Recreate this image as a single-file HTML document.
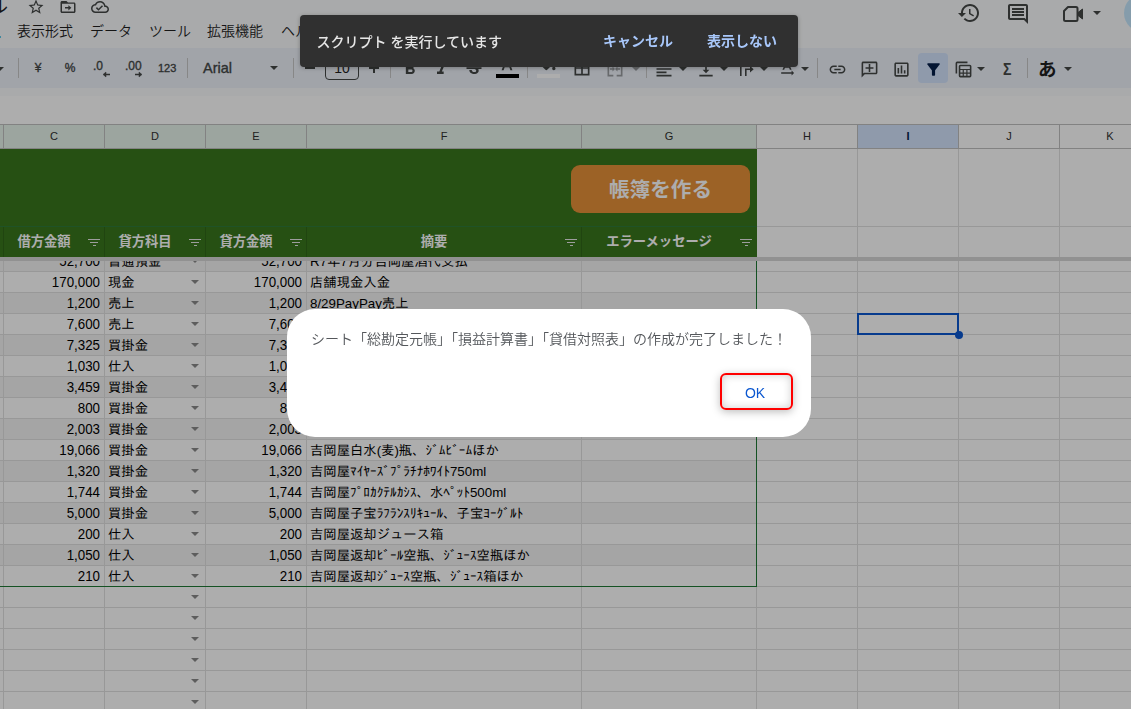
<!DOCTYPE html>
<html lang="ja"><head><meta charset="utf-8"><title>仕訳帳</title>
<style>
*{box-sizing:border-box;margin:0;padding:0}
html,body{width:1131px;height:709px;overflow:hidden;background:#fff}
body{font-family:"Liberation Sans","Noto Sans CJK JP",sans-serif;color:#1f1f1f}
#app{position:relative;width:1131px;height:709px;overflow:hidden;background:#fff}
svg{display:block;position:absolute;overflow:visible}
/* ---------- top bar ---------- */
#topbar{position:absolute;left:0;top:0;width:1131px;height:96px;background:#f9fbfd}
#title{position:absolute;left:-10px;top:-5px;font-size:18px;line-height:24px;color:#1f1f1f;white-space:nowrap}
.menu{position:absolute;top:21px;font-size:14px;line-height:20px;color:#1f1f1f;white-space:nowrap;font-weight:350}
#toolbar{position:absolute;left:0;top:48px;width:1131px;height:40px;background:#edf2fa}
.sep{position:absolute;top:10px;width:1px;height:20px;background:#c7c7c7}
.tb{position:absolute;color:#444746;white-space:nowrap}
.arr{position:absolute;width:0;height:0;border-left:4px solid transparent;border-right:4px solid transparent;border-top:4px solid #444746}
#fontbox{position:absolute;left:325px;top:8px;width:34px;height:24px;border:1px solid #444746;border-radius:4px;font-size:14px;line-height:22px;text-align:center;color:#1f1f1f}
#filteron{position:absolute;left:918px;top:5px;width:30px;height:30px;border-radius:4px;background:#d3e3fd}
#avatar{position:absolute;left:1124px;top:-6px;width:38px;height:38px;border-radius:50%;background:#c4e6fd}
/* ---------- sheet ---------- */
#sheet{position:absolute;left:0;top:0;width:1131px;height:709px}
.chbar{position:absolute;left:0;top:124px;width:1131px;height:25px;background:#c0c0c0}
.ch{position:absolute;top:125px;height:23px;background:#fff;font-size:11px;line-height:23px;text-align:center;color:#303030}
.ch.flt{background:#e6f4ea}
.ch.sel{background:#d3e3fd;color:#041e49;font-weight:bold}
.band{position:absolute;left:0;top:149px;width:757px;height:108px;background:#38761d}
.bandline{position:absolute;left:0;top:226px;width:757px;height:1px;background:#2f7a3a}
.mkbtn{position:absolute;left:571px;top:165px;width:179px;height:48px;border-radius:9px;background:#e69138;color:#fff;font-weight:bold;font-size:20.6px;line-height:50px;text-align:center;font-family:"Liberation Sans","Noto Sans CJK JP",sans-serif}
.hd{position:absolute;top:227px;height:30px;color:#fff;font-weight:bold;font-size:13.300px;line-height:29px;text-align:center;padding-right:20px;white-space:nowrap}
.fi{position:absolute;right:4px;top:12px;width:12px;height:8px;
 background:linear-gradient(#e8e8e8,#e8e8e8) 0 0/12px 1px no-repeat,linear-gradient(#e8e8e8,#e8e8e8) 2px 3px/8px 1px no-repeat,linear-gradient(#e8e8e8,#e8e8e8) 4.5px 6px/3px 1px no-repeat}
.bandrow{position:absolute;left:0;width:756px;background:#f3f3f3}
.hl{position:absolute;left:0;right:0;height:1px;background:#e1e1e1}
.vl{position:absolute;top:149px;bottom:0;width:1px;background:#e1e1e1}
.vh{position:absolute;top:124px;height:25px;width:1px;background:#c0c0c0}
.row{position:absolute;left:0;width:1131px;height:20px;font-size:13.33px;line-height:20px;color:#000}
.c{position:absolute;top:0;height:20px;white-space:nowrap;overflow:hidden}
.num{text-align:right;padding-right:4px;transform:scaleY(1.07);transform-origin:0 5px}
.txt{top:1px;text-align:left;padding-left:3px;font-family:"Liberation Sans","IPAGothic","Noto Sans CJK JP",sans-serif}
.dd{position:absolute;top:8px;width:0;height:0;border-left:4px solid transparent;border-right:4px solid transparent;border-top:4px solid #8a8a8a}
.freeze{position:absolute;left:0;top:257px;width:1131px;height:4px;background:#d6d6d6}
.gv{position:absolute;left:756px;top:261px;width:1px;height:326px;background:#1e7a34}
.gh{position:absolute;left:0;top:586px;width:757px;height:1px;background:#1e7a34}
.selbox{position:absolute;left:857px;top:313px;width:102px;height:22px;border:2px solid #0b57d0}
.seldot{position:absolute;left:955px;top:331px;width:8px;height:8px;border-radius:50%;background:#0b57d0}
#scrim{position:absolute;left:0;top:0;width:1131px;height:709px;background:rgba(0,0,0,.32)}
/* ---------- overlays ---------- */
#toast{will-change:transform;position:absolute;left:300px;top:15px;width:498px;height:51.500px;border-radius:4px;background:#303030;box-shadow:0 1px 4px rgba(0,0,0,.28)}
#toast .msg{position:absolute;left:16.500px;top:16px;font-size:14px;line-height:22px;color:#e6e6e6;font-weight:500;white-space:nowrap}
#toast .act{position:absolute;top:15px;font-size:14px;line-height:22px;color:#a8c7fa;font-weight:700;white-space:nowrap}
#dlg{will-change:transform;position:absolute;left:287px;top:309px;width:524px;height:128px;border-radius:28px;background:#fff}
#dlg .msg{position:absolute;left:24px;top:19px;font-size:14px;line-height:22px;color:#54575b;font-weight:350;white-space:nowrap}
#ok{position:absolute;left:433px;top:64.400px;width:73px;height:37px;border:2px solid #f00;border-radius:6px;font-size:14px;line-height:37px;text-align:center;text-indent:-3px;color:#0b57d0;box-shadow:0 2px 8px rgba(0,0,0,.26),inset 0 0 8px rgba(0,0,0,.2)}

.hv{position:absolute;top:227px;height:30px;width:1px;background:rgba(0,0,0,.13)}
#cy{position:absolute;left:0;top:36px;width:1px;height:2px;background:#5cc8e8}
.tk{-webkit-text-stroke:.350px #444746}

</style></head>
<body>
<div id="app">
<div id="topbar">
<div id="title">ル</div><div id="cy"></div>
<svg style="left:27px;top:-2px" width="18" height="18" viewBox="0 0 24 24" fill="#444746"><path d="M22 9.24l-7.19-.62L12 2 9.19 8.63 2 9.24l5.46 4.73L5.82 21 12 17.27 18.18 21l-1.63-7.03L22 9.24zM12 15.4l-3.76 2.27 1-4.28-3.32-2.88 4.38-.38L12 6.1l1.71 4.04 4.38.38-3.32 2.88 1 4.28L12 15.4z"/></svg>
<svg style="left:59px;top:-2px" width="18" height="18" viewBox="0 0 24 24" fill="#444746"><path d="M20 6h-8l-2-2H4c-1.100 0-2 .900-2 2v12c0 1.100.900 2 2 2h16c1.100 0 2-.900 2-2V8c0-1.100-.900-2-2-2zm0 12H4V7.500h16V18zM8 12h4.500V9.500L16.500 13l-4 3.500V14H8z"/></svg>
<svg style="left:91px;top:-2px" width="18" height="18" viewBox="0 0 24 24" fill="#444746"><path d="M19.35 10.04C18.67 6.59 15.64 4 12 4 9.11 4 6.6 5.64 5.35 8.04 2.34 8.36 0 10.91 0 14c0 3.31 2.69 6 6 6h13c2.76 0 5-2.24 5-5 0-2.64-2.05-4.78-4.65-4.96zM19 18H6c-2.21 0-4-1.79-4-4 0-2.05 1.53-3.76 3.56-3.97l1.07-.11.5-.95C8.08 7.14 9.94 6 12 6c2.62 0 4.88 1.86 5.39 4.43l.3 1.5 1.53.11c1.56.1 2.78 1.41 2.78 2.96 0 1.65-1.35 3-3 3zm-9-3.82l-2.09-2.09L6.5 13.5 10 17l6.01-6.01-1.41-1.41z"/></svg>
<div class="menu" style="left:17px">表示形式</div>
<div class="menu" style="left:90px">データ</div>
<div class="menu" style="left:149px">ツール</div>
<div class="menu" style="left:207px">拡張機能</div>
<div class="menu" style="left:281px">ヘルプ</div>
<!-- right icons -->
<svg style="left:957px;top:1px" width="24" height="24" viewBox="0 0 24 24" fill="#444746"><path d="M13 3c-4.97 0-9 4.03-9 9H1l3.89 3.89.07.14L9 12H6c0-3.87 3.13-7 7-7s7 3.13 7 7-3.13 7-7 7c-1.93 0-3.68-.79-4.94-2.06l-1.42 1.42C8.27 19.99 10.51 21 13 21c4.97 0 9-4.03 9-9s-4.03-9-9-9zm-1 5v5l4.28 2.54.72-1.21-3.5-2.08V8H12z"/></svg>
<svg style="left:1006px;top:2px" width="24" height="24" viewBox="0 0 24 24" fill="#444746"><path d="M21.99 4c0-1.1-.89-2-1.99-2H4c-1.1 0-2 .9-2 2v12c0 1.1.9 2 2 2h14l4 4-.01-18zM20 4v13.17L18.83 16H4V4h16zM6 12h12v2H6zm0-3h12v2H6zm0-3h12v2H6z"/></svg>
<svg style="left:1061px;top:2px" width="24" height="24" viewBox="0 0 24 24" fill="none" stroke="#444746" stroke-width="2" stroke-linejoin="round"><path d="M7 5h8a1.500 1.500 0 0 1 1.500 1.500v11A1.500 1.500 0 0 1 15 19H4.500A1.500 1.500 0 0 1 3 17.500V9z"/><path d="M17 10.500l4.500-3.500v10l-4.500-3.500z" fill="#444746" stroke-width="1"/></svg>
<div class="arr" style="left:1093px;top:11px"></div>
<div id="avatar"></div>
<div id="toolbar">
<div class="arr" style="left:-4px;top:19px"></div>
<div class="sep" style="left:18px"></div>
<div class="tb tk" style="left:33px;top:11px;font-size:12px;line-height:18px;width:10px;text-align:center">¥</div>
<div class="tb tk" style="left:64px;top:11px;font-size:12px;line-height:18px;width:12px;text-align:center">%</div>
<div class="tb tk" style="left:93px;top:9px;font-size:12px;line-height:18px">.0</div>
<svg style="left:102px;top:23px" width="9" height="7" viewBox="0 0 9 7" fill="#444746" stroke="#444746" stroke-width="1.500"><path d="M8 3.500H2.500"/><path d="M4 1L1 3.500L4 6z" stroke-width=".500"/></svg>
<div class="tb tk" style="left:125px;top:9px;font-size:12px;line-height:18px">.00</div>
<svg style="left:133.500px;top:23px" width="9" height="7" viewBox="0 0 9 7" fill="#444746" stroke="#444746" stroke-width="1.500"><path d="M1 3.500H6.500"/><path d="M5 1L8 3.500L5 6z" stroke-width=".500"/></svg>
<div class="tb tk" style="left:158px;top:11px;font-size:11px;line-height:18px">123</div>
<div class="sep" style="left:187px"></div>
<div class="tb tk" style="left:203px;top:10px;font-size:14.500px;line-height:20px">Arial</div>
<div class="arr" style="left:270px;top:18px"></div>
<div class="sep" style="left:293px"></div>
<div class="tb" style="left:305px;top:19px;width:10px;height:2px;background:#444746"></div>
<div id="fontbox">10</div>
<div class="tb" style="left:369px;top:19px;width:10px;height:2px;background:#444746"></div>
<div class="tb" style="left:373px;top:15px;width:2px;height:10px;background:#444746"></div>
<div class="sep" style="left:390px"></div>
<svg style="left:400px;top:10.500px" width="20" height="20" viewBox="0 0 24 24" fill="#444746"><path d="M15.600 10.790c.970-.670 1.650-1.770 1.650-2.790 0-2.260-1.750-4-4-4H7v14h7.040c2.090 0 3.710-1.700 3.710-3.790 0-1.520-.860-2.820-2.150-3.420zM10 6.500h3c.830 0 1.500.670 1.500 1.500s-.670 1.500-1.500 1.500h-3v-3zm3.500 9H10v-3h3.500c.830 0 1.500.670 1.500 1.500s-.670 1.500-1.500 1.500z"/></svg>
<svg style="left:432px;top:10.500px" width="20" height="20" viewBox="0 0 24 24" fill="#444746"><path d="M10 4v3h2.210l-3.420 8H6v3h8v-3h-2.210l3.420-8H18V4z"/></svg>
<svg style="left:464px;top:10.500px" width="20" height="20" viewBox="0 0 24 24" fill="#444746"><path d="M7.240 8.750c-.260-.480-.390-1.030-.390-1.670 0-.610.130-1.160.400-1.670.260-.500.630-.930 1.110-1.290.480-.350 1.050-.630 1.700-.830.660-.190 1.390-.290 2.180-.290.810 0 1.540.110 2.210.340.660.220 1.230.540 1.690.940.470.400.830.880 1.080 1.430.250.550.380 1.150.380 1.810h-3.010c0-.310-.050-.590-.150-.850-.090-.270-.240-.490-.440-.680-.200-.190-.450-.330-.750-.440-.300-.100-.660-.160-1.060-.160-.390 0-.740.040-1.030.130-.290.090-.530.210-.720.360-.190.160-.340.340-.440.550-.100.210-.150.430-.150.660 0 .480.250.880.740 1.210.380.250.770.480 1.410.700H7.390c-.050-.080-.110-.170-.150-.250zM21 12v-2H3v2h9.620c.180.070.400.140.550.200.370.170.660.340.870.510.210.170.350.360.430.570.070.200.110.430.110.690 0 .230-.050.450-.140.660-.090.200-.230.380-.420.530-.190.150-.420.260-.710.350-.290.080-.630.130-1.010.130-.430 0-.830-.040-1.180-.130s-.660-.230-.910-.420c-.250-.190-.450-.440-.590-.750-.140-.310-.250-.760-.250-1.210H6.400c0 .550.080 1.130.240 1.580.160.450.370.850.650 1.210.280.350.600.660.980.920.370.260.780.480 1.220.650.440.170.900.300 1.380.390.480.080.960.130 1.440.130.800 0 1.530-.090 2.180-.280s1.210-.450 1.670-.790c.460-.340.820-.770 1.070-1.270s.380-1.070.380-1.710c0-.600-.100-1.140-.310-1.610-.050-.110-.110-.230-.170-.330H21z"/></svg>
<svg style="left:497px;top:8px" width="20" height="20" viewBox="0 0 24 24" fill="#444746"><path d="M5.490 17h2.420l1.270-3.580h5.650L16.090 17h2.420L13.250 3h-2.500L5.490 17zm4.420-5.610l2.030-5.790h.12l2.030 5.790H9.910z"/></svg>
<div class="tb" style="left:496px;top:26px;width:23px;height:4px;background:#000"></div>
<div class="sep" style="left:527px"></div>
<svg style="left:538px;top:8px" width="20" height="20" viewBox="0 0 24 24" fill="#444746"><path d="M16.56 8.94L7.62 0 6.21 1.41l2.38 2.38-5.15 5.15c-.59.59-.59 1.54 0 2.12l5.5 5.5c.29.29.68.44 1.06.44s.77-.15 1.06-.44l5.5-5.5c.59-.58.59-1.53 0-2.12zM5.21 10L10 5.21 14.79 10H5.21zM19 11.5s-2 2.17-2 3.5c0 1.1.9 2 2 2s2-.9 2-2c0-1.33-2-3.5-2-3.5z"/></svg>
<div class="tb" style="left:537px;top:26px;width:23px;height:4px;background:#fff"></div>
<svg style="left:572px;top:10px" width="20" height="20" viewBox="0 0 24 24" fill="#444746"><path d="M3 3v18h18V3H3zm8 16H5v-6h6v6zm0-8H5V5h6v6zm8 8h-6v-6h6v6zm0-8h-6V5h6v6z"/></svg>
<svg style="left:605px;top:10.500px" width="20" height="20" viewBox="0 0 24 24" fill="#9a9d9f"><path d="M3 3h7v2H5v14h5v2H3zM21 3h-7v2h5v14h-5v2h7zM6 11h3V9l3 3-3 3v-2H6zM18 11h-3V9l-3 3 3 3v-2h3z" transform="translate(0,0)"/></svg>
<div class="arr" style="left:632px;top:19px;border-top-color:#9a9d9f"></div>
<div class="sep" style="left:646px"></div>
<svg style="left:654px;top:10.500px" width="20" height="20" viewBox="0 0 24 24" fill="#444746"><path d="M15 15H3v2h12v-2zm0-8H3v2h12V7zM3 13h18v-2H3v2zm0 8h18v-2H3v2zM3 3v2h18V3H3z"/></svg>
<div class="arr" style="left:679px;top:19px"></div>
<svg style="left:695.500px;top:10.500px" width="20" height="20" viewBox="0 0 24 24" fill="#444746"><path d="M16 13h-3V3h-2v10H8l4 4 4-4zM4 19v2h16v-2H4z"/></svg>
<div class="arr" style="left:719.500px;top:19px"></div>
<svg style="left:736px;top:10.500px" width="20" height="20" viewBox="0 0 20 20" fill="#444746"><path d="M4 3h1.600v14H4zM9 9.500h1.600v7.500H9zM9 9.500h5V7l3.700 3.300L14 13.600v-2.500H9z"/></svg>
<div class="arr" style="left:759.500px;top:19px"></div>
<svg style="left:776.600px;top:9.500px" width="20" height="20" viewBox="0 0 24 24" fill="#444746"><path d="M12.750 3h-1.500L6.500 14h2.100l.900-2.200h5l.900 2.200h2.100L12.750 3zm-2.620 7L12 4.980 13.870 10h-3.740zm10.370 8l-3-3v2H5v2h12.500v2l3-3z"/></svg>
<div class="arr" style="left:801px;top:19px"></div>
<div class="sep" style="left:817px"></div>
<svg style="left:827.500px;top:11.500px" width="19" height="19" viewBox="0 0 24 24" fill="#444746"><path d="M3.9 12c0-1.710 1.390-3.100 3.100-3.100h4V7H7c-2.760 0-5 2.240-5 5s2.240 5 5 5h4v-1.900H7c-1.710 0-3.100-1.390-3.100-3.100zM8 13h8v-2H8v2zm9-6h-4v1.900h4c1.710 0 3.100 1.390 3.100 3.100s-1.390 3.100-3.100 3.100h-4V17h4c2.760 0 5-2.240 5-5s-2.240-5-5-5z"/></svg>
<svg style="left:859.500px;top:11.500px" width="19" height="19" viewBox="0 0 24 24" fill="#444746"><g transform="translate(24,0) scale(-1,1)"><path d="M22 4c0-1.100-.900-2-2-2H4c-1.100 0-2 .900-2 2v12c0 1.100.900 2 2 2h14l4 4V4zm-2 13.170L18.830 16H4V4h16v13.170zM13 5h-2v4H7v2h4v4h2v-4h4V9h-4z"/></g></svg>
<svg style="left:891.500px;top:11.500px" width="19" height="19" viewBox="0 0 24 24" fill="#444746"><path d="M9 17H7v-7h2v7zm4 0h-2V7h2v10zm4 0h-2v-4h2v4zm2 2H5V5h14v14zm0-16H5c-1.100 0-2 .900-2 2v14c0 1.100.900 2 2 2h14c1.100 0 2-.900 2-2V5c0-1.100-.900-2-2-2z"/></svg>
<div id="filteron"></div>
<svg style="left:923.500px;top:11.500px" width="19" height="19" viewBox="0 0 24 24" fill="#041e49"><path d="M4.250 5.610C6.270 8.200 10 13 10 13v6c0 .550.450 1 1 1h2c.550 0 1-.450 1-1v-6s3.720-4.800 5.740-7.390A.998.998 0 0 0 18.950 4H5.040c-.830 0-1.300.950-.790 1.610z"/></svg>
<svg style="left:953.500px;top:11.500px" width="19" height="19" viewBox="0 0 24 24" fill="none" stroke="#444746" stroke-width="2"><path d="M3 17V4a1 1 0 0 1 1-1h13"/><rect x="7" y="7" width="14" height="14" rx="1"/><path d="M7 12h14M7 16.500h14M11.700 12v9M16.300 12v9" stroke-width="1.500"/></svg>
<div class="arr" style="left:977.300px;top:19px"></div>
<div class="tb" style="left:1003px;top:10px;font-size:16.500px;line-height:22px;font-weight:bold;transform:scaleX(.86);transform-origin:0 0">Σ</div>
<div class="sep" style="left:1027px"></div>
<div class="tb" style="left:1038px;top:10px;font-size:18.500px;line-height:24px;color:#1f1f1f;font-weight:700">あ</div>
<div class="arr" style="left:1064px;top:19px"></div>
</div>
</div>
<div id="sheet">
<div class="bandrow" style="top:261px;height:10px"></div>
<div class="bandrow" style="top:293px;height:20px"></div>
<div class="bandrow" style="top:335px;height:20px"></div>
<div class="bandrow" style="top:377px;height:20px"></div>
<div class="bandrow" style="top:419px;height:20px"></div>
<div class="bandrow" style="top:461px;height:20px"></div>
<div class="bandrow" style="top:503px;height:20px"></div>
<div class="bandrow" style="top:545px;height:20px"></div>
<div class="hl" style="top:271px"></div>
<div class="hl" style="top:292px"></div>
<div class="hl" style="top:313px"></div>
<div class="hl" style="top:334px"></div>
<div class="hl" style="top:355px"></div>
<div class="hl" style="top:376px"></div>
<div class="hl" style="top:397px"></div>
<div class="hl" style="top:418px"></div>
<div class="hl" style="top:439px"></div>
<div class="hl" style="top:460px"></div>
<div class="hl" style="top:481px"></div>
<div class="hl" style="top:502px"></div>
<div class="hl" style="top:523px"></div>
<div class="hl" style="top:544px"></div>
<div class="hl" style="top:565px"></div>
<div class="hl" style="top:586px"></div>
<div class="hl" style="top:607px"></div>
<div class="hl" style="top:628px"></div>
<div class="hl" style="top:649px"></div>
<div class="hl" style="top:670px"></div>
<div class="hl" style="top:691px"></div>
<div class="hl" style="top:712px"></div>
<div class="hl" style="top:226px"></div>
<div class="vl" style="left:3px"></div>
<div class="vl" style="left:104px"></div>
<div class="vl" style="left:205px"></div>
<div class="vl" style="left:306px"></div>
<div class="vl" style="left:581px"></div>
<div class="vl" style="left:756px"></div>
<div class="vl" style="left:857px"></div>
<div class="vl" style="left:958px"></div>
<div class="vl" style="left:1059px"></div>
<div class="row" style="top:251px"><span class="c num" style="left:4px;width:100px">52,700</span><span class="c txt" style="left:105px;width:100px">普通預金</span><i class="dd" style="left:191px"></i><span class="c num" style="left:206px;width:100px">52,700</span><span class="c txt" style="left:307px;width:274px">R7年7月分吉岡屋酒代支払</span></div>
<div class="row" style="top:272px"><span class="c num" style="left:4px;width:100px">170,000</span><span class="c txt" style="left:105px;width:100px">現金</span><i class="dd" style="left:191px"></i><span class="c num" style="left:206px;width:100px">170,000</span><span class="c txt" style="left:307px;width:274px">店舗現金入金</span></div>
<div class="row" style="top:293px"><span class="c num" style="left:4px;width:100px">1,200</span><span class="c txt" style="left:105px;width:100px">売上</span><i class="dd" style="left:191px"></i><span class="c num" style="left:206px;width:100px">1,200</span><span class="c txt" style="left:307px;width:274px">8/29PayPay売上</span></div>
<div class="row" style="top:314px"><span class="c num" style="left:4px;width:100px">7,600</span><span class="c txt" style="left:105px;width:100px">売上</span><i class="dd" style="left:191px"></i><span class="c num" style="left:206px;width:100px">7,600</span><span class="c txt" style="left:307px;width:274px">8/30PayPay売上</span></div>
<div class="row" style="top:335px"><span class="c num" style="left:4px;width:100px">7,325</span><span class="c txt" style="left:105px;width:100px">買掛金</span><i class="dd" style="left:191px"></i><span class="c num" style="left:206px;width:100px">7,325</span><span class="c txt" style="left:307px;width:274px">吉岡屋</span></div>
<div class="row" style="top:356px"><span class="c num" style="left:4px;width:100px">1,030</span><span class="c txt" style="left:105px;width:100px">仕入</span><i class="dd" style="left:191px"></i><span class="c num" style="left:206px;width:100px">1,030</span><span class="c txt" style="left:307px;width:274px">吉岡屋</span></div>
<div class="row" style="top:377px"><span class="c num" style="left:4px;width:100px">3,459</span><span class="c txt" style="left:105px;width:100px">買掛金</span><i class="dd" style="left:191px"></i><span class="c num" style="left:206px;width:100px">3,459</span><span class="c txt" style="left:307px;width:274px">吉岡屋</span></div>
<div class="row" style="top:398px"><span class="c num" style="left:4px;width:100px">800</span><span class="c txt" style="left:105px;width:100px">買掛金</span><i class="dd" style="left:191px"></i><span class="c num" style="left:206px;width:100px">800</span><span class="c txt" style="left:307px;width:274px">吉岡屋</span></div>
<div class="row" style="top:419px"><span class="c num" style="left:4px;width:100px">2,003</span><span class="c txt" style="left:105px;width:100px">買掛金</span><i class="dd" style="left:191px"></i><span class="c num" style="left:206px;width:100px">2,003</span><span class="c txt" style="left:307px;width:274px">吉岡屋</span></div>
<div class="row" style="top:440px"><span class="c num" style="left:4px;width:100px">19,066</span><span class="c txt" style="left:105px;width:100px">買掛金</span><i class="dd" style="left:191px"></i><span class="c num" style="left:206px;width:100px">19,066</span><span class="c txt" style="left:307px;width:274px">吉岡屋白水(麦)瓶、ｼﾞﾑﾋﾞｰﾑほか</span></div>
<div class="row" style="top:461px"><span class="c num" style="left:4px;width:100px">1,320</span><span class="c txt" style="left:105px;width:100px">買掛金</span><i class="dd" style="left:191px"></i><span class="c num" style="left:206px;width:100px">1,320</span><span class="c txt" style="left:307px;width:274px">吉岡屋ﾏｲﾔｰｽﾞﾌﾟﾗﾁﾅﾎﾜｲﾄ750ml</span></div>
<div class="row" style="top:482px"><span class="c num" style="left:4px;width:100px">1,744</span><span class="c txt" style="left:105px;width:100px">買掛金</span><i class="dd" style="left:191px"></i><span class="c num" style="left:206px;width:100px">1,744</span><span class="c txt" style="left:307px;width:274px">吉岡屋ﾌﾟﾛｶｸﾃﾙｶｼｽ、水ﾍﾟｯﾄ500ml</span></div>
<div class="row" style="top:503px"><span class="c num" style="left:4px;width:100px">5,000</span><span class="c txt" style="left:105px;width:100px">買掛金</span><i class="dd" style="left:191px"></i><span class="c num" style="left:206px;width:100px">5,000</span><span class="c txt" style="left:307px;width:274px">吉岡屋子宝ﾗﾌﾗﾝｽﾘｷｭｰﾙ、子宝ﾖｰｸﾞﾙﾄ</span></div>
<div class="row" style="top:524px"><span class="c num" style="left:4px;width:100px">200</span><span class="c txt" style="left:105px;width:100px">仕入</span><i class="dd" style="left:191px"></i><span class="c num" style="left:206px;width:100px">200</span><span class="c txt" style="left:307px;width:274px">吉岡屋返却ジュース箱</span></div>
<div class="row" style="top:545px"><span class="c num" style="left:4px;width:100px">1,050</span><span class="c txt" style="left:105px;width:100px">仕入</span><i class="dd" style="left:191px"></i><span class="c num" style="left:206px;width:100px">1,050</span><span class="c txt" style="left:307px;width:274px">吉岡屋返却ﾋﾞｰﾙ空瓶、ｼﾞｭｰｽ空瓶ほか</span></div>
<div class="row" style="top:566px"><span class="c num" style="left:4px;width:100px">210</span><span class="c txt" style="left:105px;width:100px">仕入</span><i class="dd" style="left:191px"></i><span class="c num" style="left:206px;width:100px">210</span><span class="c txt" style="left:307px;width:274px">吉岡屋返却ｼﾞｭｰｽ空瓶、ｼﾞｭｰｽ箱ほか</span></div>
<div class="row" style="top:587px"><i class="dd" style="left:191px"></i></div>
<div class="row" style="top:608px"><i class="dd" style="left:191px"></i></div>
<div class="row" style="top:629px"><i class="dd" style="left:191px"></i></div>
<div class="row" style="top:650px"><i class="dd" style="left:191px"></i></div>
<div class="row" style="top:671px"><i class="dd" style="left:191px"></i></div>
<div class="row" style="top:692px"><i class="dd" style="left:191px"></i></div>
<div class="chbar"></div>
<div class="ch flt" style="left:0;width:3px"></div>
<div class="ch flt" style="left:4px;width:100px">C</div>
<div class="ch flt" style="left:105px;width:100px">D</div>
<div class="ch flt" style="left:206px;width:100px">E</div>
<div class="ch flt" style="left:307px;width:274px">F</div>
<div class="ch flt" style="left:582px;width:174px">G</div>
<div class="ch" style="left:757px;width:100px">H</div>
<div class="ch sel" style="left:858px;width:100px">I</div>
<div class="ch" style="left:959px;width:100px">J</div>
<div class="ch" style="left:1060px;width:100px">K</div>
<div class="band"></div><div class="bandline"></div>
<div class="mkbtn">帳簿を作る</div>
<div class="hd" style="left:4px;width:100px"><span>借方金額</span><i class="fi"></i></div>
<div class="hd" style="left:105px;width:100px"><span>貸方科目</span><i class="fi"></i></div>
<div class="hd" style="left:206px;width:100px"><span>貸方金額</span><i class="fi"></i></div>
<div class="hd" style="left:307px;width:274px"><span>摘要</span><i class="fi"></i></div>
<div class="hd" style="left:582px;width:174px"><span>エラーメッセージ</span><i class="fi"></i></div>
<div class="hv" style="left:3px"></div>
<div class="hv" style="left:104px"></div>
<div class="hv" style="left:205px"></div>
<div class="hv" style="left:306px"></div>
<div class="hv" style="left:581px"></div>
<div class="freeze"></div>
<div class="gv"></div><div class="gh"></div>
<div class="selbox"></div><div class="seldot"></div>
</div>
<div id="scrim"></div>
<div id="toast"><span class="msg">スクリプト を実行しています</span><span class="act" style="left:303px">キャンセル</span><span class="act" style="left:407px">表示しない</span></div>
<div id="dlg"><div class="msg">シート「総勘定元帳」「損益計算書」「貸借対照表」の作成が完了しました！</div><div id="ok">OK</div></div>
</div>
</body></html>
